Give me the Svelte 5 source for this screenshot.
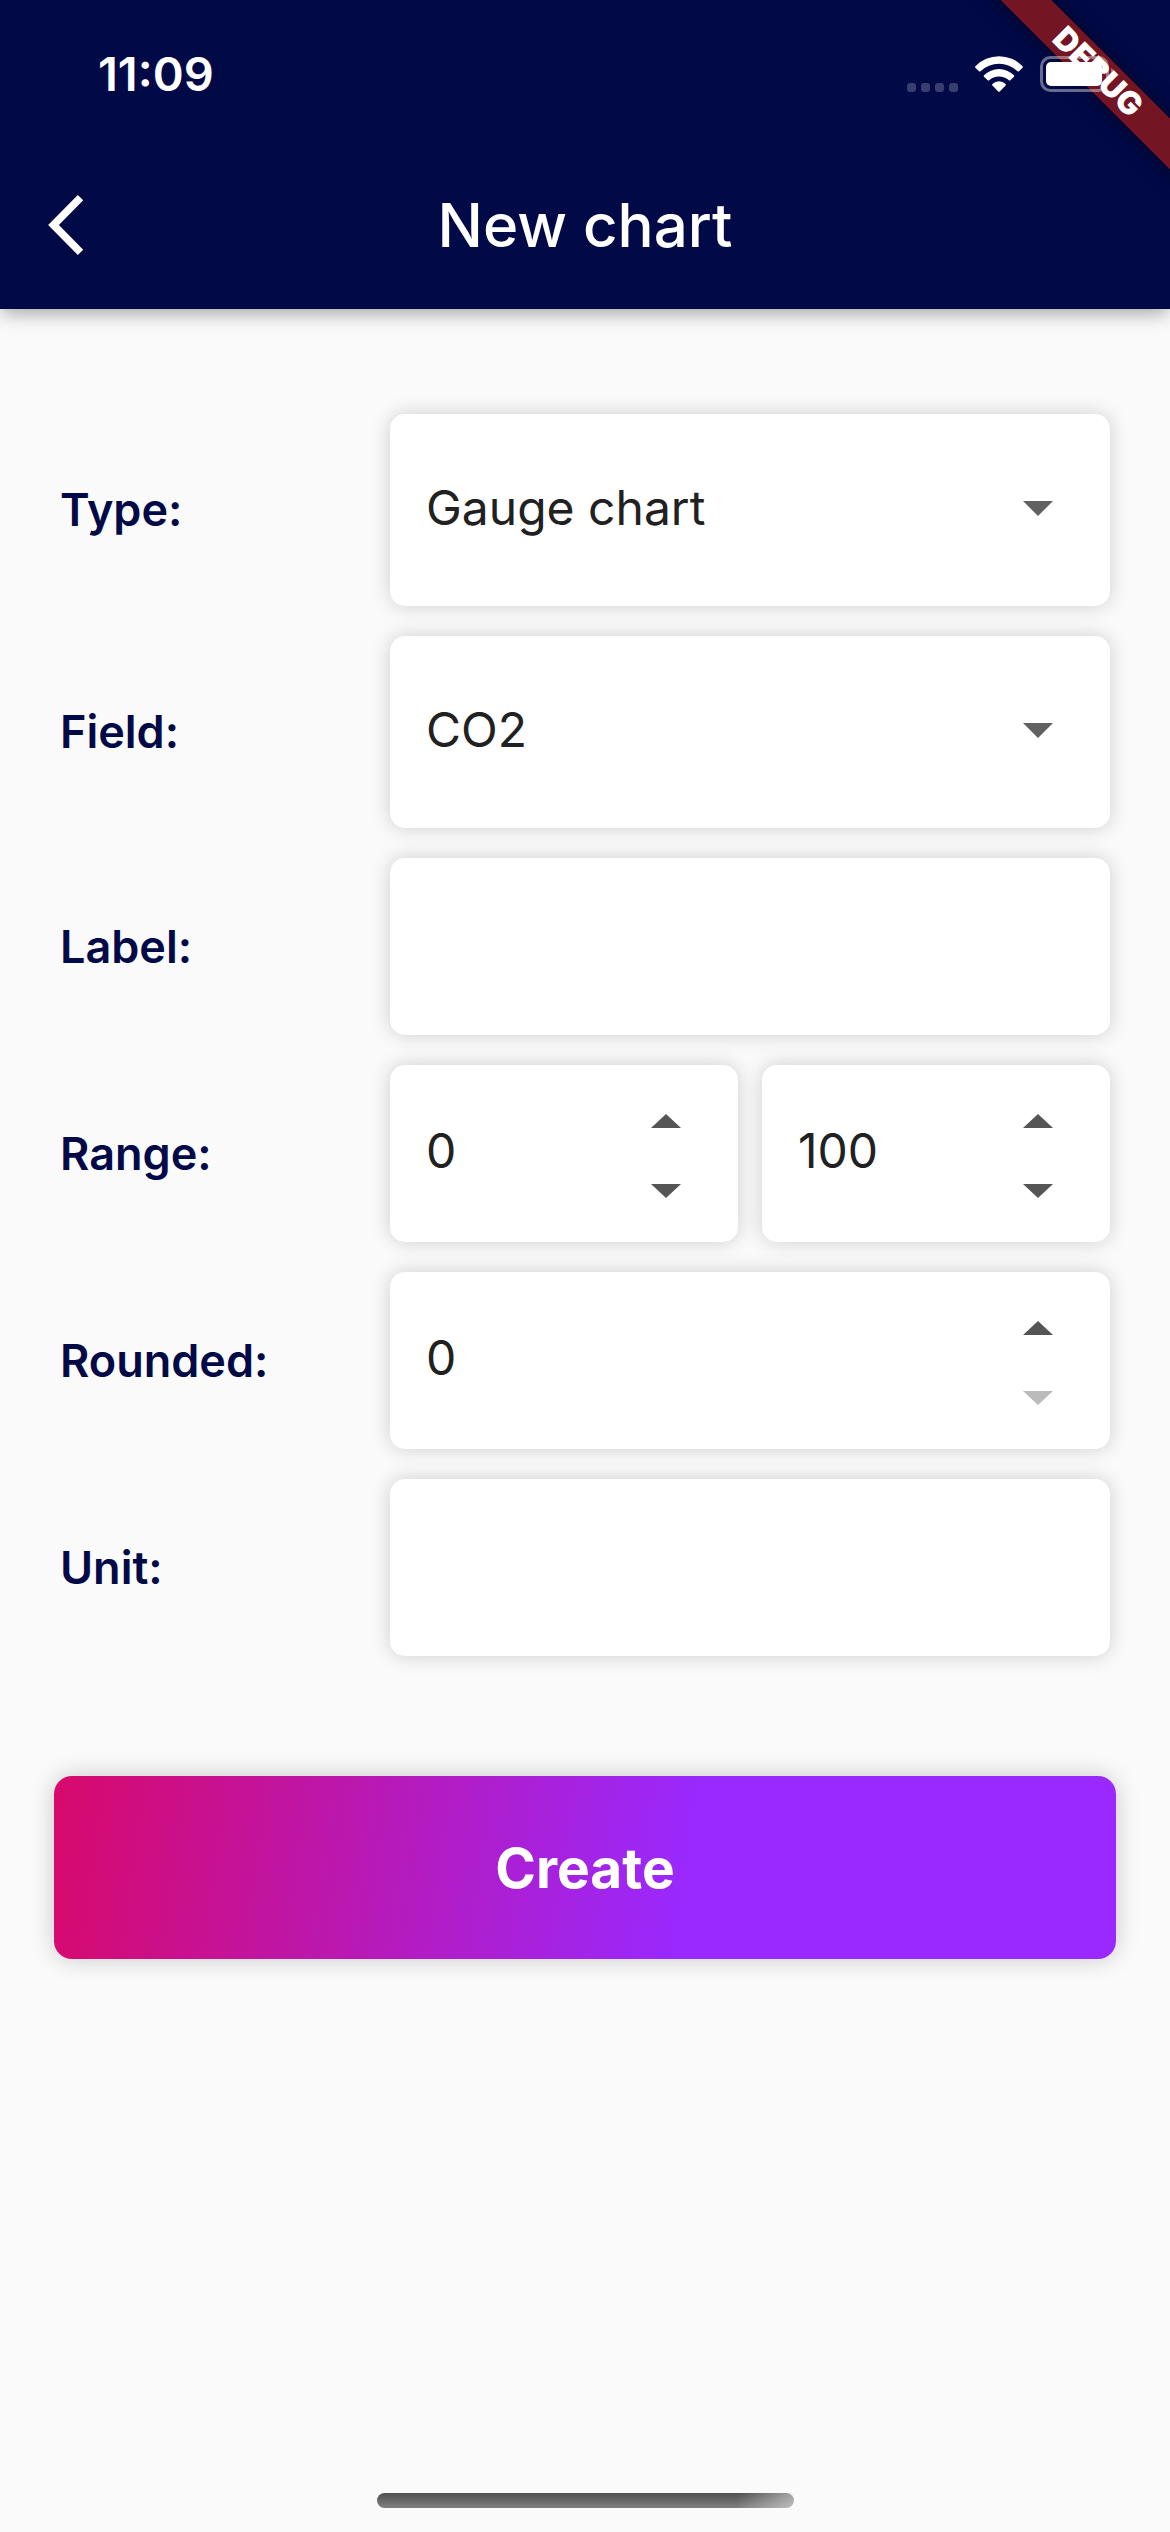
<script>
  let type = $state('Gauge chart');
  let field = $state('CO2');
  let label = $state('');
  let min = $state(0);
  let max = $state(100);
  let rounded = $state(0);
  let unit = $state('');
</script>

{#snippet stepper(id, name, value, set, floor)}
  <div class="box number">
    <input
      {id}
      type="number"
      aria-label={name}
      {value}
      oninput={(e) => set(Number(e.currentTarget.value))}
    />
    <div class="steps">
      <button type="button" aria-label="Increase {name}" onclick={() => set(value + 1)}>
        <svg viewBox="0 0 30 14" aria-hidden="true"><path d="M0 14 15 0 30 14Z" /></svg>
      </button>
      <button
        type="button"
        aria-label="Decrease {name}"
        disabled={value <= floor}
        onclick={() => set(value - 1)}
      >
        <svg viewBox="0 0 30 14" aria-hidden="true"><path d="M0 0H30L15 14Z" /></svg>
      </button>
    </div>
  </div>
{/snippet}

<div class="page">
  <header>
    <div class="corner"><span class="ribbon">DEBUG</span></div>
    <div class="status">
      <span class="time">11:09</span>
      <div class="indicators">
        <svg width="51" height="36" viewBox="0 0 51 36" fill="#fff" fill-opacity="0.22" aria-hidden="true">
          <rect x="0" y="27" width="9" height="9" rx="3" />
          <rect x="14" y="27" width="9" height="9" rx="3" />
          <rect x="28" y="27" width="9" height="9" rx="3" />
          <rect x="42" y="27" width="9" height="9" rx="3" />
        </svg>
        <svg width="48" height="36" viewBox="0 0 48 36" fill="#fff" aria-hidden="true">
          <path d="M.4 10.2A33 33 0 0 1 47.6 10.2Q48.3 11 47.6 11.7L44 15.2Q43.3 15.9 42.5 15.2A27 27 0 0 0 5.5 15.2Q4.7 15.9 4 15.2L.4 11.7Q-.3 11 .4 10.2Z" />
          <path d="M9 19.2A21.5 21.5 0 0 1 39 19.2Q39.7 20 39 20.7L35.3 24.2Q34.6 24.9 33.8 24.2A14.6 14.6 0 0 0 14.2 24.2Q13.4 24.9 12.7 24.2L9 20.7Q8.3 20 9 19.2Z" />
          <path d="M17.4 28A9.6 9.6 0 0 1 30.6 28Q31.3 28.8 30.6 29.5L24.8 35.4Q24 36.1 23.2 35.4L17.4 29.5Q16.7 28.8 17.4 28Z" />
        </svg>
        <svg width="75" height="36" viewBox="0 0 75 36" aria-hidden="true">
          <rect x="1.5" y="1.5" width="66" height="33" rx="9" fill="none" stroke="#fff" stroke-opacity="0.4" stroke-width="3" />
          <rect x="6" y="6" width="56" height="24" rx="5" fill="#fff" />
          <path d="M71 12Q75 14 75 18T71 24Z" fill="#fff" fill-opacity="0.4" />
        </svg>
      </div>
    </div>
    <div class="toolbar">
      <button class="back" type="button" aria-label="Back">
        <svg width="36" height="60" viewBox="0 0 36 60" aria-hidden="true">
          <path d="M32.5 2.7 5.5 30 32.5 57.3" fill="none" stroke="#fff" stroke-width="7.6" />
        </svg>
      </button>
      <h1>New chart</h1>
    </div>
  </header>

  <form onsubmit={(e) => e.preventDefault()}>
    <div class="fields">
      <div class="row">
        <label for="type">Type:</label>
        <div class="box choice">
          <select id="type" bind:value={type}>
            <option>Gauge chart</option>
            <option>Line chart</option>
          </select>
          <svg viewBox="0 0 30 15" aria-hidden="true"><path d="M0 0H30L15 15Z" /></svg>
        </div>
      </div>
      <div class="row">
        <label for="field">Field:</label>
        <div class="box choice">
          <select id="field" bind:value={field}>
            <option>CO2</option>
            <option>Temperature</option>
          </select>
          <svg viewBox="0 0 30 15" aria-hidden="true"><path d="M0 0H30L15 15Z" /></svg>
        </div>
      </div>
      <div class="row">
        <label for="label">Label:</label>
        <div class="box"><input id="label" type="text" bind:value={label} /></div>
      </div>
      <div class="row">
        <label for="min">Range:</label>
        <div class="pair">
          {@render stepper('min', 'Range minimum', min, (v) => (min = v), -Infinity)}
          {@render stepper('max', 'Range maximum', max, (v) => (max = v), -Infinity)}
        </div>
      </div>
      <div class="row">
        <label for="rounded">Rounded:</label>
        {@render stepper('rounded', 'Rounded', rounded, (v) => (rounded = v), 0)}
      </div>
      <div class="row">
        <label for="unit">Unit:</label>
        <div class="box"><input id="unit" type="text" bind:value={unit} /></div>
      </div>
    </div>
    <button class="create" type="submit">Create</button>
  </form>

  <div class="home"></div>
</div>

<style>
  :global(body) {
    margin: 0;
    background: #fafafa;
  }

  .page {
    display: flex;
    flex-direction: column;
    min-height: 100vh;
    font-family: Inter, 'Liberation Sans', sans-serif;
    background: #fafafa;
  }

  button,
  input,
  select {
    margin: 0;
    padding: 0;
    border: 0;
    outline: 0;
    background: none;
    font: inherit;
    color: inherit;
  }

  svg {
    display: block;
    flex: none;
  }

  header {
    position: relative;
    background: #010947;
    color: #fff;
    box-shadow: 0 6px 18px -2px rgba(0, 0, 0, 0.36);
  }

  .corner {
    position: absolute;
    top: 0;
    right: 0;
    width: 250px;
    height: 250px;
    overflow: hidden;
    pointer-events: none;
  }

  .ribbon {
    position: absolute;
    top: 54px;
    left: -22px;
    width: 400px;
    height: 36px;
    line-height: 36px;
    text-align: center;
    font-size: 32px;
    font-weight: 900;
    background: #731522;
    box-shadow: 0 0 18px rgba(0, 0, 0, 0.5);
    transform: rotate(45deg);
  }

  .status {
    position: relative;
    display: flex;
    justify-content: space-between;
    align-items: center;
    padding: 46px 55px 39px 98px;
  }

  .time {
    font-size: 47px;
    line-height: 56px;
    font-weight: 600;
  }

  .indicators {
    display: flex;
    gap: 17px;
  }

  .toolbar {
    display: grid;
    grid-template-columns: 1fr auto 1fr;
    align-items: center;
    height: 168px;
    padding: 0 48px;
  }

  .back {
    justify-self: start;
  }

  h1 {
    margin: 0;
    font-size: 60px;
    line-height: 72px;
    font-weight: 500;
  }

  form {
    display: flex;
    flex-direction: column;
    gap: 120px;
    padding: 105px 54px 60px;
  }

  .fields {
    display: flex;
    flex-direction: column;
    gap: 30px;
    padding: 0 6px;
  }

  .row {
    display: grid;
    grid-template-columns: 330px 1fr;
    align-items: center;
  }

  label {
    font-size: 45px;
    line-height: 54px;
    font-weight: 600;
    color: #010947;
  }

  .box {
    display: flex;
    align-items: center;
    box-sizing: border-box;
    min-width: 0;
    height: 177px;
    padding: 0 57px 0 36px;
    border-radius: 15px;
    background: #fff;
    box-shadow: 0 0 20px rgba(0, 0, 0, 0.18);
    font-size: 48px;
    color: #212121;
  }

  .box input,
  .box select {
    flex: 1;
    min-width: 0;
    height: 100%;
    padding-bottom: 6px;
    box-sizing: border-box;
    appearance: none;
  }

  .choice {
    position: relative;
    height: 192px;
    padding: 0;
  }

  .choice select {
    padding-left: 36px;
    padding-right: 100px;
  }

  .choice svg {
    position: absolute;
    right: 57px;
    width: 30px;
    padding-bottom: 4px;
    fill: #616161;
    pointer-events: none;
  }

  .pair {
    display: grid;
    grid-template-columns: 1fr 1fr;
    gap: 24px;
  }

  .number input {
    appearance: textfield;
  }

  .number input::-webkit-inner-spin-button {
    appearance: none;
    margin: 0;
  }

  .steps {
    display: flex;
    flex-direction: column;
    gap: 8px;
    padding-top: 5px;
  }

  .steps button {
    padding: 24px 0;
  }

  .steps svg {
    width: 30px;
    fill: #555;
  }

  .steps button:disabled svg {
    fill: #bbb;
  }

  .create {
    height: 183px;
    border-radius: 18px;
    background: linear-gradient(98deg, #d8096b, #9929ff 60%);
    box-shadow: 0 0 24px rgba(0, 0, 0, 0.2);
    font-size: 55px;
    font-weight: 700;
    color: #fff;
  }

  .home {
    align-self: center;
    width: 417px;
    max-width: 60%;
    height: 15px;
    margin: auto 0 24px;
    border-radius: 8px;
    background:
      linear-gradient(105deg, transparent 86%, rgba(255, 255, 255, 0.5)),
      linear-gradient(#505050, #808080);
  }
</style>
